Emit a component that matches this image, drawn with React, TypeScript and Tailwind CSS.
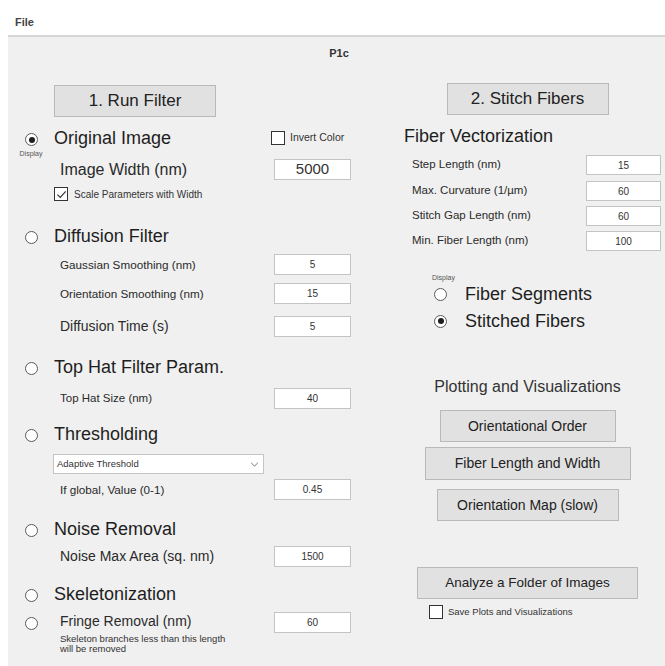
import React from "react";

function Radio({ on }: { on?: boolean }) {
  return (
    <span className="flex h-[13px] w-[13px] shrink-0 items-center justify-center rounded-full border-[1.5px] border-[#5a5a5a] bg-white">
      {on && <span className="h-[6px] w-[6px] rounded-full bg-[#1e1e1e]" />}
    </span>
  );
}

function Check({ on }: { on?: boolean }) {
  return (
    <span className="flex h-[14px] w-[14px] shrink-0 items-center justify-center border border-[#333] bg-white">
      {on && (
        <svg viewBox="0 0 12 12" className="h-[11px] w-[11px]">
          <path d="M1.5 6.2 L4.6 9.2 L10.6 2.6" fill="none" stroke="#333" strokeWidth="1.3" />
        </svg>
      )}
    </span>
  );
}

function Field({ value, big, w = "w-[77px]", h = "h-[21px]" }: { value: string; big?: boolean; w?: string; h?: string }) {
  return (
    <div
      className={`flex ${w} ${h} shrink-0 items-center justify-center border border-[#c4c4c4] bg-white text-[#333] ${
        big ? "text-[15px]" : "text-[10px]"
      }`}
    >
      {value}
    </div>
  );
}

function Btn({ children, className }: { children: React.ReactNode; className: string }) {
  return (
    <div className={`flex items-center justify-center border border-[#b9b9b9] bg-[#e1e1e1] text-[#222] ${className}`}>
      {children}
    </div>
  );
}

// one labelled numeric parameter on the left side
function Param({ label, value, size, className = "", big }: { label: string; value: string; size: string; className?: string; big?: boolean }) {
  return (
    <div className={`flex h-[21px] items-center ${className}`}>
      <span className={`flex-1 pl-[6px] text-[#2a2a2a] ${size}`}>{label}</span>
      <Field value={value} big={big} />
    </div>
  );
}

function Section({
  title,
  on,
  display,
  extra,
  className = "",
  children,
}: {
  title: string;
  on?: boolean;
  display?: boolean;
  extra?: React.ReactNode;
  className?: string;
  children?: React.ReactNode;
}) {
  return (
    <div className={`flex ${className}`}>
      <div className="flex w-[46px] shrink-0 flex-col items-center">
        <div className="flex h-[22px] items-center pt-[3px] pl-[1px]">
          <Radio on={on} />
        </div>
        {display && <span className="mt-[1px] text-[7px] leading-[8px] text-[#555]">Display</span>}
      </div>
      <div className="flex w-[297px] flex-col">
        <div className="flex h-[22px] items-center">
          <span className="flex-1 text-[18px] text-[#1e1e1e]">{title}</span>
          {extra}
        </div>
        {children}
      </div>
    </div>
  );
}

function ParamRight({ label, value, className = "" }: { label: string; value: string; className?: string }) {
  return (
    <div className={`flex h-[20px] items-center ${className}`}>
      <span className="flex-1 pl-[18px] text-[11.5px] text-[#2a2a2a]">{label}</span>
      <Field value={value} w="w-[75px]" h="h-[20px]" />
    </div>
  );
}

export default function App() {
  return (
    <div className="flex h-[666px] w-[665px] flex-col overflow-hidden bg-white font-['Liberation_Sans',Arial,sans-serif]">
      {/* menu bar */}
      <div className="h-[35px] shrink-0 pl-[15px] pt-[16px] text-[11px] font-bold leading-[12px] text-[#444]">File</div>

      <div className="ml-[8px] flex flex-1 flex-col border-t-2 border-[#d6d6d6] bg-[#f0f0f0]">
        <div className="flex h-[32px] items-center justify-center pl-[5px] text-[11px] font-bold text-[#333]">P1c</div>

        <div className="flex">
          {/* left: filtering pipeline */}
          <div className="flex w-[352px] flex-col">
            <Btn className="ml-[46px] mt-[16px] h-[32px] w-[162px] text-[17px]">1. Run Filter</Btn>

            <Section
              title="Original Image"
              on
              display
              className="mt-[10px]"
              extra={
                <div className="flex w-[80px] items-center gap-[5px]">
                  <Check />
                  <span className="text-[10.5px] text-[#333]">Invert Color</span>
                </div>
              }
            >
              <Param label="Image Width (nm)" value="5000" size="text-[16px]" className="mt-[10px]" big />
              <div className="mt-[7px] flex h-[14px] items-center gap-[6px]">
                <Check on />
                <span className="text-[10px] text-[#333]">Scale Parameters with Width</span>
              </div>
            </Section>

            <Section title="Diffusion Filter" className="mt-[24px]">
              <Param label="Gaussian Smoothing (nm)" value="5" size="text-[11.7px]" className="mt-[7px]" />
              <Param label="Orientation Smoothing (nm)" value="15" size="text-[11.7px]" className="mt-[8px]" />
              <Param label="Diffusion Time (s)" value="5" size="text-[14px]" className="mt-[12px]" />
            </Section>

            <Section title="Top Hat Filter Param." className="mt-[19px]">
              <Param label="Top Hat Size (nm)" value="40" size="text-[11.5px]" className="mt-[10px]" />
            </Section>

            <Section title="Thresholding" className="mt-[14px]">
              <div className="-ml-[1px] mt-[9px] flex h-[20px] w-[211px] items-center border border-[#c4c4c4] bg-white pl-[3px]">
                <span className="flex-1 text-[9.5px] text-[#333]">Adaptive Threshold</span>
                <svg viewBox="0 0 10 6" className="mr-[4px] h-[5px] w-[9px]">
                  <path d="M1 1 L5 5 L9 1" fill="none" stroke="#777" strokeWidth="1.2" />
                </svg>
              </div>
              <Param label="If global, Value (0-1)" value="0.45" size="text-[11.7px]" className="mt-[5px]" />
            </Section>

            <Section title="Noise Removal" className="mt-[18px]">
              <Param label="Noise Max Area (sq. nm)" value="1500" size="text-[14px]" className="mt-[6px]" />
            </Section>

            <Section title="Skeletonization" className="mt-[16px]" />

            <div className="mt-[7px] flex">
              <div className="flex h-[21px] w-[46px] shrink-0 items-center justify-center pl-[1px] pt-[2px]">
                <Radio />
              </div>
              <div className="flex w-[297px] flex-col">
                <div className="flex h-[21px] items-center">
                  <span className="flex-1 pl-[6px] pb-[3px] text-[14px] text-[#2a2a2a]">Fringe Removal (nm)</span>
                  <Field value="60" />
                </div>
                <div className="mt-[1px] pl-[6px] text-[9.5px] leading-[10px] text-[#333]">
                  Skeleton branches less than this length
                  <br />
                  will be removed
                </div>
              </div>
            </div>
          </div>

          {/* right: vectorization and plots */}
          <div className="ml-[34px] flex w-[267px] flex-col items-center">
            <Btn className="mt-[14px] h-[32px] w-[162px] text-[17px]">2. Stitch Fibers</Btn>

            <div className="mt-[10px] flex h-[22px] w-full items-center pl-[10px] text-[18px] text-[#1e1e1e]">
              Fiber Vectorization
            </div>
            <div className="flex w-full flex-col">
              <ParamRight label="Step Length (nm)" value="15" className="mt-[8px]" />
              <ParamRight label="Max. Curvature (1/µm)" value="60" className="mt-[6px]" />
              <ParamRight label="Stitch Gap Length (nm)" value="60" className="mt-[5px]" />
              <ParamRight label="Min. Fiber Length (nm)" value="100" className="mt-[5px]" />

              <div className="mt-[22px] h-[10px] pl-[38px] text-[7px] leading-[10px] text-[#555]">Display</div>
              <div className="mt-[1px] flex h-[20px] items-center pl-[40px]">
                <Radio />
                <span className="ml-[18px] text-[18px] text-[#1e1e1e]">Fiber Segments</span>
              </div>
              <div className="mt-[7px] flex h-[20px] items-center pl-[40px]">
                <Radio on />
                <span className="ml-[18px] text-[18px] text-[#1e1e1e]">Stitched Fibers</span>
              </div>
            </div>

            <div className="mt-[46px] flex h-[20px] items-center text-[16px] text-[#333]">Plotting and Visualizations</div>
            <Btn className="mt-[13px] h-[32px] w-[176px] text-[14px]">Orientational Order</Btn>
            <Btn className="mt-[5px] h-[33px] w-[206px] text-[14px]">Fiber Length and Width</Btn>
            <Btn className="mt-[9px] h-[32px] w-[182px] text-[14px]">Orientation Map (slow)</Btn>

            <Btn className="mt-[46px] h-[32px] w-[221px] text-[13.5px]">Analyze a Folder of Images</Btn>
            <div className="mt-[6px] flex h-[14px] items-center gap-[5px] self-start pl-[35px]">
              <Check />
              <span className="text-[9.5px] text-[#333]">Save Plots and Visualizations</span>
            </div>
          </div>
        </div>
      </div>
    </div>
  );
}
